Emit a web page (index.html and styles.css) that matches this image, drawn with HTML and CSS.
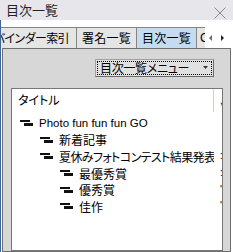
FILE: index.html
```html
<!DOCTYPE html>
<html lang="ja">
<head>
<meta charset="utf-8">
<link rel="stylesheet" href="styles.css">
</head>
<body>
<div class="titlebar">
  <span class="title">目次一覧</span>
  <svg class="close" width="12" height="12" viewBox="0 0 12 12"><path d="M0.5 0.5 L11.5 11.5 M11.5 0.5 L0.5 11.5" stroke="#8a8a8a" stroke-width="1" fill="none"/></svg>
</div>
<div class="main">
  <div class="tabrow">
    <div class="tabs">
      <div class="tab tab-first">バインダー索引</div>
      <div class="tab">署名一覧</div>
      <div class="tab tab-active">目次一覧</div>
      <div class="tab tab-last">C</div>
    </div>
    <div class="arrows">
      <svg width="4" height="6" viewBox="0 0 4 6"><path d="M3 0 L3 6 L0 3 Z" fill="#6a6a6a"/></svg>
      <svg width="4" height="6" viewBox="0 0 4 6"><path d="M0 0 L0 6 L3 3 Z" fill="#222"/></svg>
    </div>
  </div>
  <div class="panel">
    <div class="toolbar">
      <div class="menu-btn">
        <div class="focus">
          <span class="menu-label">目次一覧メニュー</span>
          <svg class="menu-arrow" width="5" height="3" viewBox="0 0 5 3"><path d="M0 0 L5 0 L2.5 3 Z" fill="#333"/></svg>
        </div>
      </div>
    </div>
    <div class="list">
      <div class="header">
        <div class="col1 hcell">タイトル</div>
        <div class="col2"><span class="mark">,</span></div>
      </div>
      <div class="rows">
        <div class="row">
          <div class="col1 lv0"><svg class="node" width="13" height="6" viewBox="0 0 13 6"><rect x="0" y="0" width="10" height="2" fill="#111"/><rect x="4" y="3" width="9" height="3" fill="#111"/></svg><span class="latin">Photo fun fun fun GO</span></div>
          <div class="col2"></div>
        </div>
        <div class="row">
          <div class="col1 lv1"><svg class="node" width="13" height="6" viewBox="0 0 13 6"><rect x="0" y="0" width="10" height="2" fill="#111"/><rect x="4" y="3" width="9" height="3" fill="#111"/></svg><span>新着記事</span></div>
          <div class="col2"></div>
        </div>
        <div class="row">
          <div class="col1 lv1"><svg class="node" width="13" height="6" viewBox="0 0 13 6"><rect x="0" y="0" width="10" height="2" fill="#111"/><rect x="4" y="3" width="9" height="3" fill="#111"/></svg><span class="long">夏休みフォトコンテスト結果発表</span></div>
          <div class="col2"><span class="mark">:</span></div>
        </div>
        <div class="row">
          <div class="col1 lv2"><svg class="node" width="13" height="6" viewBox="0 0 13 6"><rect x="0" y="0" width="10" height="2" fill="#111"/><rect x="4" y="3" width="9" height="3" fill="#111"/></svg><span>最優秀賞</span></div>
          <div class="col2"><span class="mark">:</span></div>
        </div>
        <div class="row">
          <div class="col1 lv2"><svg class="node" width="13" height="6" viewBox="0 0 13 6"><rect x="0" y="0" width="10" height="2" fill="#111"/><rect x="4" y="3" width="9" height="3" fill="#111"/></svg><span>優秀賞</span></div>
          <div class="col2"><span class="mark">'</span></div>
        </div>
        <div class="row">
          <div class="col1 lv2"><svg class="node" width="13" height="6" viewBox="0 0 13 6"><rect x="0" y="0" width="10" height="2" fill="#111"/><rect x="4" y="3" width="9" height="3" fill="#111"/></svg><span>佳作</span></div>
          <div class="col2"><span class="mark">'</span></div>
        </div>
      </div>
    </div>
  </div>
</div>
</body>
</html>
```

FILE: styles.css
```css
html, body {
  margin: 0;
  padding: 0;
}
body {
  width: 233px;
  height: 252px;
  overflow: hidden;
  background: #ffffff;
  font-family: "Noto Sans CJK JP", sans-serif;
  font-feature-settings: "palt";
  color: #000;
  font-size: 12px;
}
.titlebar {
  height: 20px;
  background: #e6e6eb;
  display: flex;
  align-items: center;
  justify-content: space-between;
  padding: 0 7px 0 6px;
}
.title {
  font-size: 13px;
  line-height: 20px;
  color: #222;
}
.close {
  margin-top: 6px;
}
.main {
  height: 232px;
  border-left: 1px solid #3e649c;
  padding-top: 7px;
  box-sizing: border-box;
  display: flex;
  flex-direction: column;
}
.tabrow {
  display: flex;
  height: 21px;
  flex: none;
}
.tabs {
  width: 204px;
  display: flex;
  overflow: hidden;
}
.tab {
  flex: none;
  width: 60px;
  height: 21px;
  box-sizing: border-box;
  border-top: 1px solid #858585;
  border-right: 1px solid #858585;
  background: #e5e5e5;
  line-height: 20px;
  display: flex;
  justify-content: center;
  white-space: nowrap;
  overflow: hidden;
  letter-spacing: 0.2px;
}
.tab-first {
  width: 76px;
  justify-content: flex-end;
  padding-right: 7px;
  letter-spacing: -0.6px;
}
.tab-active {
  background: #c5dbef;
}
.tab-last {
  width: 30px;
  justify-content: flex-start;
  padding-left: 3px;
  font-family: "Liberation Sans", sans-serif;
}
.arrows {
  width: 25px;
  display: flex;
  align-items: center;
  gap: 8px;
  padding-left: 4px;
  box-sizing: border-box;
  background: #fff;
}
.panel {
  flex: 1;
  width: 229px;
  margin-left: 1px;
  box-sizing: border-box;
  border: 1px solid #6f6f6f;
  background: #d7d7d7;
  padding: 10px 7px 0 8px;
  display: flex;
  flex-direction: column;
}
.toolbar {
  display: flex;
  justify-content: flex-end;
  padding-right: 9px;
}
.menu-btn {
  width: 119px;
  height: 18px;
  box-sizing: border-box;
  border: 1px solid #a0a0a0;
  border-right-color: #6a6a6a;
  border-bottom-color: #6a6a6a;
  background: #e1e1e1;
  padding: 1px;
}
.focus {
  height: 14px;
  box-sizing: border-box;
  border: 1px dotted #000;
  display: flex;
  align-items: center;
  justify-content: space-between;
  padding: 0 3px 0 2px;
}
.menu-label {
  line-height: 12px;
  font-size: 12px;
  letter-spacing: -0.3px;
}
.menu-arrow {
  margin-top: -2px;
}
.list {
  margin-top: 11px;
  flex: 1;
  border: 1px solid #777;
  background: #fff;
}
.header {
  display: flex;
  height: 23px;
}
.col1 {
  width: 202px;
  flex: none;
  box-sizing: border-box;
  display: flex;
  align-items: center;
  white-space: nowrap;
  overflow: hidden;
}
.hcell {
  border-right: 1px solid #d0d0d0;
  padding-left: 6px;
  line-height: 22px;
  align-items: flex-start;
}
.col2 {
  flex: 1;
  padding-left: 6px;
  display: flex;
  align-items: center;
  overflow: hidden;
}
.mark {
  font-family: "Liberation Sans", sans-serif;
  font-size: 10px;
  line-height: 10px;
}
.rows {
  padding-top: 3px;
}
.row {
  display: flex;
  height: 16.6px;
}
.node {
  flex: none;
  margin-right: 6px;
}
.lv0 { padding-left: 8px; }
.lv1 { padding-left: 28px; }
.lv2 { padding-left: 48px; }
.latin {
  font-family: "Liberation Sans", sans-serif;
  font-size: 11.5px;
}
.long {
  letter-spacing: -0.6px;
}
```
